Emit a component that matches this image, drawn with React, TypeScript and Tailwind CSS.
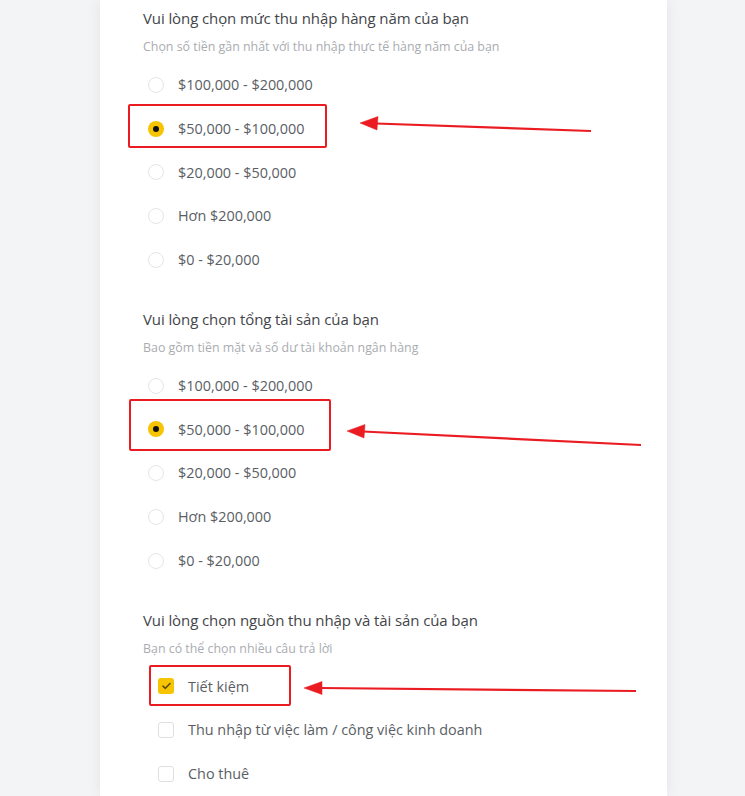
import React from "react";

type Section = {
  title: string;
  hint: string;
  kind: "radio" | "check";
  options: string[];
  selected: number;
};

const SECTIONS: Section[] = [
  {
    title: "Vui lòng chọn mức thu nhập hàng năm của bạn",
    hint: "Chọn số tiền gần nhất với thu nhập thực tế hàng năm của bạn",
    kind: "radio",
    options: ["$100,000 - $200,000", "$50,000 - $100,000", "$20,000 - $50,000", "Hơn $200,000", "$0 - $20,000"],
    selected: 1,
  },
  {
    title: "Vui lòng chọn tổng tài sản của bạn",
    hint: "Bao gồm tiền mặt và số dư tài khoản ngân hàng",
    kind: "radio",
    options: ["$100,000 - $200,000", "$50,000 - $100,000", "$20,000 - $50,000", "Hơn $200,000", "$0 - $20,000"],
    selected: 1,
  },
  {
    title: "Vui lòng chọn nguồn thu nhập và tài sản của bạn",
    hint: "Bạn có thể chọn nhiều câu trả lời",
    kind: "check",
    options: ["Tiết kiệm", "Thu nhập từ việc làm / công việc kinh doanh", "Cho thuê"],
    selected: 0,
  },
];

function Radio({ on }: { on: boolean }) {
  if (on) {
    return (
      <span className="flex h-4 w-4 shrink-0 items-center justify-center rounded-full bg-[#f6c400]">
        <span className="h-[6px] w-[6px] rounded-full bg-[#111]" />
      </span>
    );
  }
  return <span className="h-4 w-4 shrink-0 rounded-full border border-[#e3e5e8] bg-white" />;
}

function Check({ on }: { on: boolean }) {
  if (on) {
    return (
      <span className="flex h-4 w-4 shrink-0 items-center justify-center rounded-[3px] bg-[#f6c400]">
        <svg width="9" height="8" viewBox="0 0 9 8" fill="none">
          <path d="M1 4.2 3.4 6.3 8 1.5" stroke="#5c4a0a" strokeWidth="1.6" strokeLinecap="round" strokeLinejoin="round" />
        </svg>
      </span>
    );
  }
  return <span className="h-4 w-4 shrink-0 rounded-[3px] border border-[#dcdfe3] bg-white" />;
}

function RedBox({ className }: { className: string }) {
  return <div className={"pointer-events-none absolute rounded-[2px] border-[2.5px] border-[#ea1c22] " + className} />;
}

export default function App() {
  return (
    <div
      className="relative min-h-[796px] w-full bg-[#f3f4f6]"
      style={{ fontFamily: '"Open Sans", "Noto Sans", sans-serif' }}
    >
      <div className="ml-[100px] min-h-[796px] w-[567px] bg-white px-[43px] pt-[8px] shadow-[0_0_14px_rgba(0,0,0,0.07)]">
        {SECTIONS.map((s, si) => (
          <section key={si} className={si > 0 ? "mt-[27px]" : ""}>
            <h3 className="h-5 text-[15px] leading-5 tracking-[-0.1px] text-[#434549]">{s.title}</h3>
            <p className="mt-[11px] h-4 text-[12.4px] leading-4 text-[#aaacb1]">{s.hint}</p>
            <ul className="mt-[8px]">
              {s.options.map((o, i) => (
                <li
                  key={o}
                  className={
                    "flex h-[43.75px] items-center gap-[14px] text-[14.4px] text-[#5a5e64] " +
                    (s.kind === "radio" ? "pl-[5px]" : "pl-[15px]")
                  }
                >
                  {s.kind === "radio" ? <Radio on={i === s.selected} /> : <Check on={i === s.selected} />}
                  <span>{o}</span>
                </li>
              ))}
            </ul>
          </section>
        ))}
      </div>

      {/* annotations */}
      <RedBox className="left-[128px] top-[104px] h-[44px] w-[199px]" />
      <RedBox className="left-[129px] top-[399px] h-[52px] w-[202px]" />
      <RedBox className="left-[149px] top-[665px] h-[41px] w-[142px]" />
      <svg className="pointer-events-none absolute left-0 top-0" width="745" height="796">
        <g fill="#ea1c22" stroke="#ea1c22">
          <line x1="376" y1="123.5" x2="591" y2="131" strokeWidth="2.2" />
          <polygon points="360,123 378,116.5 377,130" strokeWidth="0.5" />
          <line x1="363" y1="431.5" x2="641" y2="445" strokeWidth="2.2" />
          <polygon points="347,431 365,424.5 364,438" strokeWidth="0.5" />
          <line x1="320" y1="688" x2="636" y2="691" strokeWidth="2.2" />
          <polygon points="304,688 322,681.5 322,694.5" strokeWidth="0.5" />
        </g>
      </svg>
    </div>
  );
}
